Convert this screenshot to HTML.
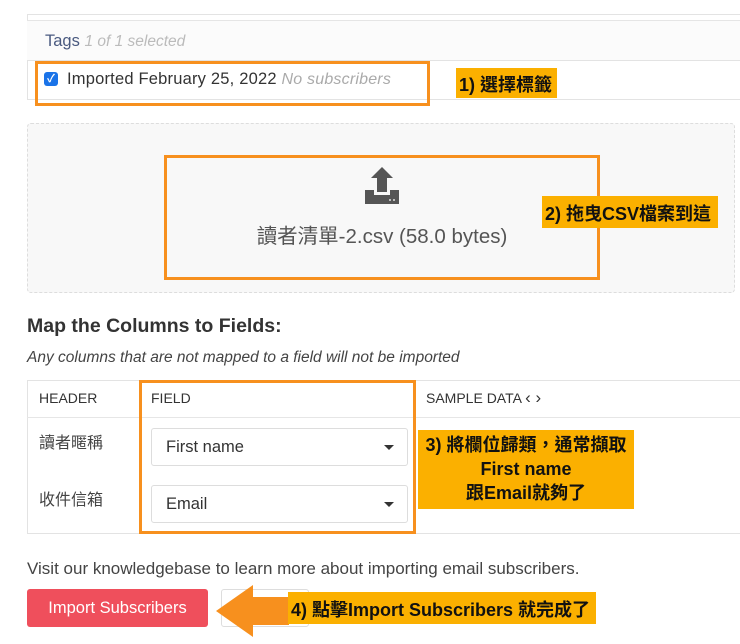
<!DOCTYPE html>
<html><head><meta charset="utf-8"><style>
body{margin:0;width:740px;height:644px;background:#fff;position:relative;overflow:hidden;font-family:"Liberation Sans","Noto Sans CJK TC",sans-serif;color:#333}
.a{position:absolute}
.ob{position:absolute;border:3px solid #f7901e;box-sizing:border-box}
.lab{position:absolute;background:#fbb000;color:#111;font-weight:bold;font-family:"Liberation Sans","Noto Sans CJK TC",sans-serif;box-sizing:border-box;white-space:nowrap}
.sel{position:absolute;border:1px solid #ddd;border-radius:3px;background:#fff;box-sizing:border-box;font-size:16.5px;color:#333;padding:9px 14px}
.sel:after{content:"";position:absolute;right:13px;top:16px;border:5px solid transparent;border-top:5px solid #333}
</style></head><body>
<div class="a" style="left:27px;top:14px;width:713px;height:86px;border:1px solid #e3e3e3;border-right:none;box-sizing:border-box"></div>
<div class="a" style="left:27px;top:20px;width:713px;height:41px;background:#fbfbfb;border-top:1px solid #e5e5e5;border-bottom:1px solid #e3e3e3;box-sizing:border-box"></div>
<div class="a" style="left:45px;top:32px;font-size:16.5px;color:#4a5a80">Tags <i style="color:#bbb;font-size:15.5px">1 of 1 selected</i></div>
<div class="a" style="left:44px;top:72px;width:14px;height:14px;background:#1a73e8;border-radius:3px;color:#fff;font-size:11px;text-align:center;line-height:14px;font-weight:bold">✓</div>
<div class="a" style="left:67px;top:70px;font-size:16.5px;color:#333;letter-spacing:0.2px">Imported February 25, 2022 <i style="color:#aaa;font-size:16px">No subscribers</i></div>
<div class="ob" style="left:35px;top:61px;width:395px;height:45px"></div>
<div class="lab" style="left:456px;top:68px;width:101px;height:30px;font-size:18px;padding:3px 3px">1) 選擇標籤</div>

<div class="a" style="left:27px;top:123px;width:708px;height:170px;background:#f8f8f8;border:1px dashed #ddd;border-radius:4px;box-sizing:border-box"></div>
<svg class="a" style="left:362px;top:167px" width="40" height="38" viewBox="0 0 40 38"><path d="M20 0 L31 11 H25 V25 H15 V11 H9 Z" fill="#555"/><path d="M3 23 H12 V28 H28 V23 H37 V37 H3 Z" fill="#555"/><circle cx="28" cy="33" r="1" fill="#ddd"/><circle cx="32" cy="33" r="1" fill="#ddd"/></svg>
<div class="a" style="left:165px;top:219px;width:434px;text-align:center;font-size:20.5px;color:#555">讀者清單-2.csv (58.0 bytes)</div>
<div class="ob" style="left:164px;top:155px;width:436px;height:125px"></div>
<div class="lab" style="left:542px;top:196px;width:176px;height:32px;font-size:18px;padding:4px 3px">2) 拖曳CSV檔案到這</div>

<div class="a" style="left:27px;top:315px;font-size:19.5px;font-weight:bold;color:#333">Map the Columns to Fields:</div>
<div class="a" style="left:27px;top:349px;font-size:15.5px;font-style:italic;color:#444">Any columns that are not mapped to a field will not be imported</div>

<div class="a" style="left:27px;top:380px;width:713px;height:154px;border:1px solid #e3e3e3;border-right:none;box-sizing:border-box"></div>
<div class="a" style="left:27px;top:417px;width:713px;height:1px;background:#e6e6e6"></div>
<div class="a" style="left:39px;top:390px;font-size:14px;color:#333">HEADER</div>
<div class="a" style="left:151px;top:390px;font-size:14px;color:#333">FIELD</div>
<div class="a" style="left:426px;top:390px;font-size:14px;color:#333">SAMPLE DATA <span style="font-size:17px;line-height:14px">‹ ›</span></div>
<div class="a" style="left:39px;top:429px;font-size:16px;color:#444">讀者暱稱</div>
<div class="a" style="left:39px;top:486px;font-size:16px;color:#444">收件信箱</div>
<div class="sel" style="left:151px;top:428px;width:257px;height:38px">First name</div>
<div class="sel" style="left:151px;top:485px;width:257px;height:38px">Email</div>
<div class="ob" style="left:139px;top:380px;width:277px;height:154px"></div>
<div class="lab" style="left:418px;top:430px;width:216px;height:79px;font-size:18px;text-align:center;line-height:24px;padding-top:3px">3) 將欄位歸類，通常擷取<br>First name<br>跟Email就夠了</div>

<div class="a" style="left:27px;top:559px;font-size:17px;color:#444">Visit our knowledgebase to learn more about importing email subscribers.</div>
<div class="a" style="left:27px;top:589px;width:181px;height:38px;background:#ef4f5c;border-radius:3px;color:#fff;font-size:16.5px;text-align:center;line-height:38px">Import Subscribers</div>
<div class="a" style="left:221px;top:589px;width:88px;height:38px;border:1px solid #ddd;border-radius:3px;box-sizing:border-box;font-size:16px;line-height:36px;padding-left:48px;color:#444">cel</div>
<svg class="a" style="left:214px;top:584px" width="75" height="54"><path d="M2 27 L39 1 V13 H75 V41 H39 V53 Z" fill="#f7901e"/></svg>
<div class="lab" style="left:288px;top:592px;width:308px;height:32px;font-size:18px;padding:4px 3px">4) 點擊Import Subscribers 就完成了</div>
</body></html>
